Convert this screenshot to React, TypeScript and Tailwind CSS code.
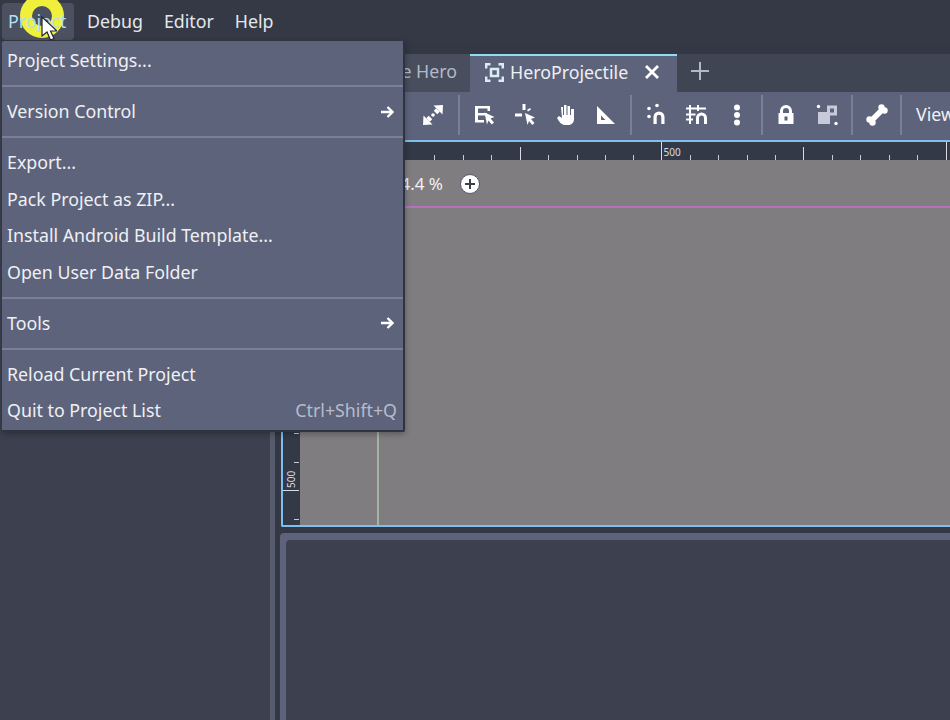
const RULER_SMALL = [434, 463, 491, 548, 577, 605, 633, 690, 718, 747, 775, 832, 860, 889, 917];
const RULER_MID = [520, 803];
const RULER_FULL = [661, 946];

const CURSOR_PATH = "M0 0l10 4.500-4 1.500 3.500 4-2.200 2-3.300-4-1.500 4z";

const TopMenu = () => (
  <div className="flex h-[42px] items-center bg-[#343945] pl-[2px] text-[17.8px]">
    <div className="flex h-[37px] w-[72px] items-center rounded-[4px] bg-[#4b5160] pl-[6px] text-[#b4dff2]">
      <span className="relative z-20">Project</span>
    </div>
    <div className="ml-[13px] text-[#e6e7ec]">Debug</div>
    <div className="ml-[21px] text-[#e6e7ec]">Editor</div>
    <div className="ml-[21px] text-[#e6e7ec]">Help</div>
  </div>
);

const MenuItem = ({ label, arrow, shortcut }: { label: string; arrow?: boolean; shortcut?: string }) => (
  <div className="flex h-[36.5px] items-center justify-between pl-[5px] pr-[6px] text-[17.8px] text-[#eff0f4]">
    <span>{label}</span>
    {arrow && (
      <svg className="mr-[3px]" width="14" height="14" viewBox="0 0 14 14" fill="none" stroke="#ffffff" strokeWidth="2.4">
        <path d="M1 7h11M7.500 2l5 5-5 5" />
      </svg>
    )}
    {shortcut && <span className="text-[#b7bccb]">{shortcut}</span>}
  </div>
);

const MenuSep = () => (
  <div className="flex h-[14.5px] items-center">
    <div className="h-[2px] w-full bg-[#7a8094]" />
  </div>
);

const ProjectMenu = () => (
  <div className="absolute left-[2px] top-[41px] z-10 h-[391px] w-[403px] rounded-[2px] border-r-2 border-b-2 border-[#2e3340] bg-[#5d637b] pt-[1.5px] shadow-[0_2px_6px_rgba(0,0,0,0.3)]">
    <MenuItem label="Project Settings..." />
    <MenuSep />
    <MenuItem label="Version Control" arrow />
    <MenuSep />
    <MenuItem label="Export..." />
    <MenuItem label="Pack Project as ZIP..." />
    <MenuItem label="Install Android Build Template..." />
    <MenuItem label="Open User Data Folder" />
    <MenuSep />
    <MenuItem label="Tools" arrow />
    <MenuSep />
    <MenuItem label="Reload Current Project" />
    <MenuItem label="Quit to Project List" shortcut="Ctrl+Shift+Q" />
  </div>
);

const Cursor = () => (
  <>
    <div className="absolute left-[20px] top-[-6px] z-[15] h-[44px] w-[44px] rounded-full border-[12px] border-[#f0f03c]" />
    <svg className="absolute left-[41px] top-[16px] z-30" width="16" height="26" viewBox="0 0 16 26">
      <path d="M1 1v19l5-4 3.500 8 3.500-1.500-3.500-7.500h6.500z" fill="#ffffff" stroke="#23262e" strokeWidth="1.2" />
    </svg>
  </>
);

const ToolIcon = ({ children, className }: { children: React.ReactNode; className: string }) => (
  <svg width="24" height="24" viewBox="0 0 24 24" fill="#ffffff" className={`shrink-0 ${className}`}>
    {children}
  </svg>
);

const Sep = ({ className }: { className: string }) => (
  <div className={`h-[40px] w-[2px] shrink-0 bg-[#7a8094] ${className}`} />
);

const Toolbar = () => (
  <div className="flex h-[48px] items-center bg-[#5d637b] pb-[2px] pl-[141px]">
    {/* view fit */}
    <ToolIcon className="">
      <path d="M12.500 2.500L22 2l-.500 9.500z" />
      <path d="M17 7l-2.500 2.500" stroke="#ffffff" strokeWidth="5" />
      <path d="M11.500 21.500L2 22l.500-9.500z" />
      <path d="M7 17l2.500-2.500" stroke="#ffffff" strokeWidth="5" />
      <circle cx="12" cy="12" r="1.800" />
    </ToolIcon>
    <Sep className="ml-[13px]" />
    {/* select */}
    <ToolIcon className="ml-[11px]">
      <path d="M4 3h15v5h-2.500V5.500H7V10h9v2.500H7v4.500h6v2.500H4z" />
      <path transform="translate(13.500 9.500)" d={CURSOR_PATH} />
    </ToolIcon>
    {/* move */}
    <ToolIcon className="ml-[17px]">
      <path d="M10.500 1h3v6h-3zM3 10.500h7v3H3zM15 7l3-2 1 1.500-3 2z" />
      <path transform="translate(13 10)" d={CURSOR_PATH} />
    </ToolIcon>
    {/* pan */}
    <ToolIcon className="ml-[17px]">
      <path d="M8 4h2v8h1V2h2.500v10h1V3H17v9h1V6h3v10c0 4-3 6-6 6h-3c-3 0-5-2-8-7l2-2 3 2z" />
    </ToolIcon>
    {/* ruler */}
    <ToolIcon className="ml-[16px]">
      <path fillRule="evenodd" d="M4 3l18 18H4zM8 12.500V17h4.500z" />
    </ToolIcon>
    <Sep className="ml-[13px]" />
    {/* smart snap */}
    <ToolIcon className="ml-[12px]">
      <circle cx="5" cy="5.500" r="1.800" />
      <circle cx="13" cy="2.500" r="1.800" />
      <circle cx="5" cy="13.500" r="1.800" />
      <path d="M9.500 21v-7a5.500 5.500 0 0 1 11 0v7h-3.200v-7a2.300 2.300 0 0 0-4.600 0v7z" />
    </ToolIcon>
    {/* grid snap */}
    <ToolIcon className="ml-[16px]">
      <path d="M5 2h2v19H5zM13 2h2v6h-2zM2 4.500h20v2H2zM2 10.500h9.500v2H2zM2 15.500h7v2H2z" />
      <path d="M12 21v-6a5.500 5.500 0 0 1 11 0v6h-3v-6a2.500 2.500 0 0 0-5 0v6z" />
    </ToolIcon>
    {/* more */}
    <ToolIcon className="ml-[17px]">
      <circle cx="12" cy="4.500" r="3" />
      <circle cx="12" cy="12" r="3" />
      <circle cx="12" cy="19.500" r="3" />
    </ToolIcon>
    <Sep className="ml-[12px]" />
    {/* lock */}
    <ToolIcon className="ml-[11px]">
      <path fillRule="evenodd" d="M4.500 10H6V8a6 6 0 0 1 12 0v2h1.500v11h-15zM9 10h6V8a3 3 0 0 0-6 0zM10.500 13.500h3v4h-3z" />
    </ToolIcon>
    {/* group */}
    <ToolIcon className="ml-[17px]">
      <path d="M3 9h12v12H3z" fill="#c8cadc" />
      <path fillRule="evenodd" d="M12 2.500h10v10H12zM15 5.500v4h4v-4z" fill="#c8cadc" />
      <circle cx="3.500" cy="3.500" r="1.700" />
      <circle cx="21" cy="20.500" r="1.700" />
    </ToolIcon>
    <Sep className="ml-[12px]" />
    {/* bone */}
    <ToolIcon className="ml-[12px]">
      <path d="M7 17L17 7" stroke="#ffffff" strokeWidth="5.500" />
      <circle cx="4.500" cy="16.500" r="3.200" />
      <circle cx="7.500" cy="19.500" r="3.200" />
      <circle cx="16.500" cy="4.500" r="3.200" />
      <circle cx="19.500" cy="7.500" r="3.200" />
    </ToolIcon>
    <Sep className="ml-[11px]" />
    <div className="ml-[14px] text-[17.8px] leading-none text-[#f0f1f5]">View</div>
  </div>
);

const Tabs = () => (
  <div className="flex h-[38px] bg-[#3f4553]">
    <div className="flex w-[190px] items-center justify-end bg-[#484e5e] pb-[3px] pr-[13px] text-[17.8px] text-[#b4b9c6]">
      e Hero
    </div>
    <div className="flex w-[207px] items-center border-t-2 border-[#8fdcf5] bg-[#5d637b] pb-[4px] pl-[15px] text-[17.8px] text-[#eff0f4]">
      <svg width="19" height="19" viewBox="0 0 19 19" fill="none" stroke="#dcecf6" strokeWidth="2.500">
        <path d="M1.200 5.500V1.200h4.300M13.500 1.200h4.300v4.300M17.800 13.500v4.300h-4.300M5.500 17.800H1.200v-4.300" />
        <rect x="6" y="6" width="7" height="7" />
      </svg>
      <span className="ml-[6px]">HeroProjectile</span>
      <svg className="ml-[16px]" width="16" height="16" viewBox="0 0 16 16" stroke="#ffffff" strokeWidth="2.800">
        <path d="M2 2l12 12M14 2L2 14" />
      </svg>
    </div>
    <div className="flex w-[45px] items-center justify-center pb-[4px]">
      <svg width="20" height="20" viewBox="0 0 20 20" stroke="#b4b9c6" strokeWidth="2">
        <path d="M10 1v18M1 10h18" />
      </svg>
    </div>
  </div>
);

const HRuler = () => (
  <svg className="block" width="667" height="18" viewBox="283 142 667 18">
    <rect x="283" y="142" width="667" height="18" fill="#343947" />
    {RULER_SMALL.map((x) => (
      <rect key={x} x={x} y="155" width="1" height="5" fill="#c8ccd6" />
    ))}
    {RULER_MID.map((x) => (
      <rect key={x} x={x} y="147" width="1" height="13" fill="#d8dbe2" />
    ))}
    {RULER_FULL.map((x) => (
      <rect key={x} x={x} y="142" width="1" height="18" fill="#d8dbe2" />
    ))}
    <text x="663.500" y="156" fontSize="10" fill="#d8dbe2">500</text>
  </svg>
);

const VRuler = () => (
  <svg className="block shrink-0" width="17" height="365" viewBox="283 160 17 365">
    <rect x="283" y="160" width="17" height="365" fill="#343947" />
    {[433, 462, 519].map((y) => (
      <rect key={y} x="294" y={y} width="5" height="1" fill="#c8ccd6" />
    ))}
    <rect x="283" y="490" width="16" height="1" fill="#d8dbe2" />
    <text x="295" y="488" fontSize="10" fill="#d8dbe2" transform="rotate(-90 295 488)">500</text>
  </svg>
);

const Viewport = () => (
  <div className="rounded-bl-[2px] border-b-2 border-l-2 border-t-2 border-[#7fc0ee]">
    <HRuler />
    <div className="flex h-[365px]">
      <VRuler />
      <div className="relative flex-1 bg-[#807d80]">
        <div className="absolute left-0 right-0 top-[46px] h-[2px] bg-[#b870ba]" />
        <div className="absolute bottom-0 left-[77px] top-0 w-[2px] bg-[#a3b6a5]" />
        <div className="absolute left-[78px] top-[11px] flex items-center text-[17px] text-[#f2f2f2]">
          <span className="w-[65px] text-right">4.4 %</span>
          <svg className="ml-[17px]" width="20" height="20" viewBox="0 0 20 20">
            <circle cx="10" cy="10" r="9.500" fill="#ffffff" stroke="#55586a" />
            <path d="M10 5v10M5 10h10" stroke="#3a3d4a" strokeWidth="2" />
          </svg>
        </div>
      </div>
    </div>
  </div>
);

export default function App() {
  return (
    <div className="relative h-[720px] w-[950px] overflow-hidden bg-[#3d414f] font-['Noto_Sans',sans-serif]">
      <TopMenu />
      <div className="flex h-[678px]">
        <div className="w-[270px] shrink-0 bg-[#3d414f]" />
        <div className="w-[5px] shrink-0 bg-[#565c6e]" />
        <div className="w-[5px] shrink-0 bg-[#333844]" />
        <div className="flex min-w-0 flex-1 flex-col bg-[#333844]">
          <div className="pt-[12px]">
            <Tabs />
            <Toolbar />
            <div className="pl-px">
              <Viewport />
            </div>
          </div>
          <div className="mt-[6px] flex-1 rounded-tl-[4px] bg-[#5d637b] pl-[6px] pt-[7px]">
            <div className="h-full rounded-tl-[4px] bg-[#3d414f]" />
          </div>
        </div>
      </div>
      <ProjectMenu />
      <Cursor />
    </div>
  );
}
